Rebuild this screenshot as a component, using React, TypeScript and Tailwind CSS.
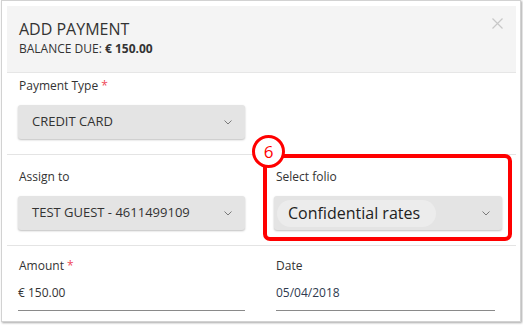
import React from "react";

function Chevron({ className = "" }: { className?: string }) {
  return (
    <svg width="8" height="5" viewBox="0 0 8 5" className={className}>
      <path d="M0.5 0.5 L4 4 L7.5 0.5" fill="none" stroke="#7a7a7a" strokeWidth="1" />
    </svg>
  );
}

export default function App() {
  return (
    <div className="w-[523px] h-[325px] bg-white relative font-['Open_Sans',sans-serif] text-[#333]">
      <div className="pl-[1px]">
        <div className="w-[520px] h-[322px] border border-[#d2d2d2] shadow-[1px_1px_2px_rgba(0,0,0,0.35)] pt-[5px] pl-[5px] pr-[4px] bg-white">
          {/* Header */}
          <div className="h-[67px] bg-[#f4f4f4] border-b border-[#e6e6e6] relative pl-[12px] pt-[12px]">
            <div className="text-[16px] leading-[22px] text-[#333]">ADD PAYMENT</div>
            <div className="text-[12px] leading-[16px] mt-[1px] text-[#333]">
              BALANCE DUE: <span className="font-bold">€ 150.00</span>
            </div>
            <svg width="11" height="11" viewBox="0 0 11 11" className="absolute left-[485px] top-[12px]">
              <path d="M0.5 0.5 L10.5 10.5 M10.5 0.5 L0.5 10.5" stroke="#c8c8c8" strokeWidth="1.2" fill="none" />
            </svg>
          </div>

          {/* Row 1 */}
          <div className="h-[82px] border-b border-[#e4e4e4] pl-[11px] pt-[5px]">
            <div className="text-[12px] leading-[16px] pl-[1px]">
              Payment Type <span className="text-[#ef4a5a]">*</span>
            </div>
            <div className="mt-[11px] w-[227px] h-[34px] bg-[#e4e4e4] rounded-[3px] shadow-[0_1px_2px_rgba(0,0,0,0.25)] flex items-center justify-between pl-[14px] pr-[13px]">
              <span className="text-[13px] text-[#333]">CREDIT CARD</span>
              <Chevron />
            </div>
          </div>

          {/* Row 2 */}
          <div className="h-[91px] border-b border-[#e4e4e4] grid grid-cols-[254px_254px]">
            <div className="pl-[11px] pt-[14px]">
              <div className="text-[12px] leading-[16px] pl-[1px]">Assign to</div>
              <div className="mt-[11px] w-[227px] h-[34px] bg-[#e4e4e4] rounded-[3px] shadow-[0_1px_2px_rgba(0,0,0,0.25)] flex items-center justify-between pl-[14px] pr-[13px]">
                <span className="text-[13px] text-[#333]">TEST GUEST - 4611499109</span>
                <Chevron />
              </div>
            </div>
            <div className="pl-[13px] pt-[14px]">
              <div className="text-[12px] leading-[16px] pl-[2px]">Select folio</div>
              <div className="mt-[11px] w-[228px] h-[34px] bg-[#e4e4e4] rounded-[3px] shadow-[0_1px_2px_rgba(0,0,0,0.25)] flex items-center justify-between pl-[3px] pr-[12px]">
                <span className="text-[16px] text-[#222] bg-[#ececec] rounded-full h-[27px] leading-[27px] pl-[11px] pr-[16px]">Confidential rates</span>
                <Chevron />
              </div>
            </div>
          </div>

          {/* Row 3 */}
          <div className="grid grid-cols-[254px_254px]">
            <div className="pl-[11px] pt-[12px]">
              <div className="text-[12px] leading-[16px] pl-[1px]">
                Amount <span className="text-[#ef4a5a]">*</span>
              </div>
              <div className="mt-[10px] w-[227px] h-[27px] border-b border-[#8a8a8a] text-[12px] leading-[16px] pt-[1px]">€ 150.00</div>
            </div>
            <div className="pl-[15px] pt-[12px]">
              <div className="text-[12px] leading-[16px]">Date</div>
              <div className="mt-[10px] w-[219px] h-[27px] border-b border-[#8a8a8a] text-[12px] leading-[16px] pt-[1px] text-[#2f3a4f]">05/04/2018</div>
            </div>
          </div>
        </div>
      </div>

      {/* Annotation overlay */}
      <div className="absolute left-[263px] top-[154px] w-[249px] h-[87px] border-[4px] border-[#ff0000] rounded-[7px] pointer-events-none" />
      <div className="absolute left-[252px] top-[135px] w-[33px] h-[33px] rounded-full border-[3px] border-[#ff0000] bg-white flex items-center justify-center text-[17px] font-medium text-[#ff0000]">
        6
      </div>
    </div>
  );
}
